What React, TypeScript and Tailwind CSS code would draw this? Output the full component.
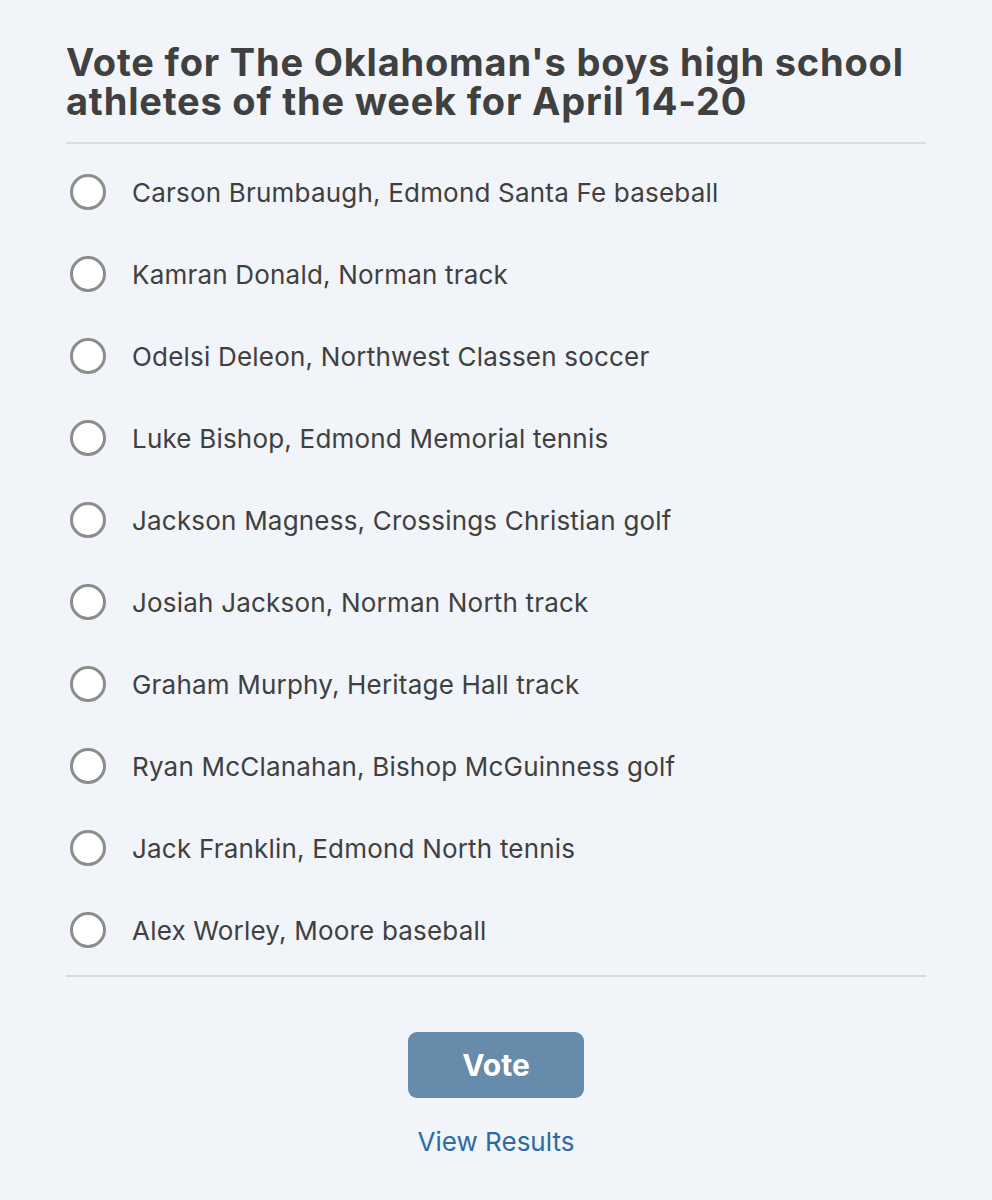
import React from 'react';

const options = [
  'Carson Brumbaugh, Edmond Santa Fe baseball',
  'Kamran Donald, Norman track',
  'Odelsi Deleon, Northwest Classen soccer',
  'Luke Bishop, Edmond Memorial tennis',
  'Jackson Magness, Crossings Christian golf',
  'Josiah Jackson, Norman North track',
  'Graham Murphy, Heritage Hall track',
  'Ryan McClanahan, Bishop McGuinness golf',
  'Jack Franklin, Edmond North tennis',
  'Alex Worley, Moore baseball',
];

const App: React.FC = () => {
  return (
    <div className="min-h-[1200px] bg-[#f1f4f8] px-[66px] pt-[43px] pb-10 font-['Inter',sans-serif] text-[#404040]">
      <h1 className="text-[38px] leading-[39px] font-bold tracking-[0.8px]">
        Vote for The Oklahoman's boys high school athletes of the week for April 14-20
      </h1>

      <div className="mt-[21px] border-t-2 border-[#d9dde2]" />

      <div className="pt-[7px] pb-[4px]">
        {options.map((name) => (
          <label key={name} className="flex h-[82px] items-center">
            <span className="ml-[4px] block h-[36px] w-[36px] rounded-full border-[3px] border-[#8c8c8c] bg-white" />
            <span className="ml-[26px] text-[26px] tracking-[0.2px]">{name}</span>
          </label>
        ))}
      </div>

      <div className="border-t-2 border-[#d9dde2]" />

      <div className="flex flex-col items-center pt-[55px]">
        <button className="h-[66px] w-[176px] rounded-[9px] bg-[#668bab] text-[30px] font-bold text-white">
          Vote
        </button>
        <a className="mt-[24px] text-[26px] text-[#2c6ba3]">View Results</a>
      </div>
    </div>
  );
};

export default App;
